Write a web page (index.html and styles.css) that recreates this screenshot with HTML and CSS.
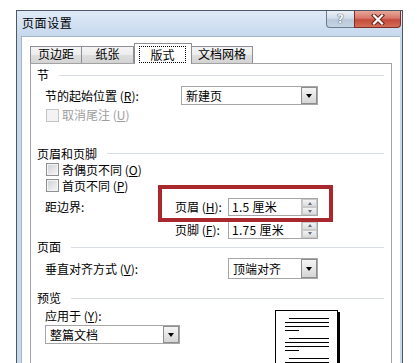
FILE: index.html
```html
<!DOCTYPE html>
<html lang="zh-CN">
<head>
<meta charset="utf-8">
<title>页面设置</title>
<link rel="stylesheet" href="styles.css">
</head>
<body>
<div class="window">
  <div class="titlebar">
    <span class="title">页面设置</span>
    <div class="caption">
      <span class="cbtn help">?</span>
      <span class="cbtn close">
        <svg width="14" height="11" viewBox="0 0 14 11"><path d="M3 1.5 L11 9.5 M11 1.5 L3 9.5" stroke="#6b2019" stroke-width="4.2" stroke-linecap="square"/><path d="M3 1.5 L11 9.5 M11 1.5 L3 9.5" stroke="#ffffff" stroke-width="2.2" stroke-linecap="square"/></svg>
      </span>
    </div>
  </div>
  <div class="frame">
    <div class="client">
      <div class="tabs">
        <div class="tab t1">页边距</div>
        <div class="tab t2">纸张</div>
        <div class="tab sel"><span class="focus">版式</span></div>
        <div class="tab t4">文档网格</div>
      </div>
      <div class="panel">
        <div class="ghead h-jie"><span>节</span><i class="rule"></i></div>
        <div class="row r-start">
          <span class="lbl w-start">节的起始位置 (<u>R</u>):</span>
          <div class="combo w-new"><span>新建页</span><b class="drop"></b></div>
        </div>
        <div class="row crow r-endnote disabled">
          <i class="chk"></i><span>取消尾注 (<u>U</u>)</span>
        </div>
        <div class="ghead h-hf"><span>页眉和页脚</span><i class="rule"></i></div>
        <div class="row crow r-odd"><i class="chk"></i><span>奇偶页不同 (<u>O</u>)</span></div>
        <div class="row crow r-first"><i class="chk"></i><span>首页不同 (<u>P</u>)</span></div>
        <div class="row r-header">
          <span class="lbl w-edge">距边界:</span>
          <span class="lbl w-hf">页眉 (<u>H</u>):</span>
          <div class="num"><span>1.5 厘米</span><b class="spin"><i class="up"></i><i class="dn"></i></b></div>
        </div>
        <div class="row r-footer">
          <span class="lbl w-edge"></span>
          <span class="lbl w-hf">页脚 (<u>F</u>):</span>
          <div class="num"><span>1.75 厘米</span><b class="spin"><i class="up"></i><i class="dn"></i></b></div>
        </div>
        <div class="ghead h-page"><span>页面</span><i class="rule"></i></div>
        <div class="row r-valign">
          <span class="lbl w-valign">垂直对齐方式 (<u>V</u>):</span>
          <div class="combo w-top"><span>顶端对齐</span><b class="drop"></b></div>
        </div>
        <div class="ghead h-prev"><span>预览</span><i class="rule"></i></div>
        <div class="prev">
          <div class="apply">
            <div class="apply-lbl">应用于 (<u>Y</u>):</div>
            <div class="combo w-doc"><span>整篇文档</span><b class="drop"></b></div>
          </div>
          <div class="page">
            <i class="ln first"></i><i class="ln"></i><i class="ln"></i><i class="ln short"></i>
            <i class="ln first gap"></i><i class="ln"></i><i class="ln"></i><i class="ln short"></i>
            <i class="ln first gap"></i><i class="ln"></i>
          </div>
        </div>
        <div class="mark"></div>
      </div>
    </div>
  </div>
</div>
</body>
</html>
```
FILE: styles.css
```css
* { box-sizing: border-box; margin: 0; padding: 0; }
html, body { width: 419px; height: 363px; overflow: hidden; background: #fff; }
body {
  font-family: "Noto Sans CJK SC", "Noto Sans", sans-serif;
  font-size: 12px;
  line-height: 14px;
  color: #000;
}
i, b { display: block; font-style: normal; }
u { text-decoration: underline; text-underline-offset: 1px; }

.window {
  margin: 10px 0 0 16px;
  width: 387px;
  height: 360px;
  border: 1px solid #4b5868;
  border-bottom: none;
  background: #c8d9ee;
  display: flex;
  flex-direction: column;
}
.titlebar {
  height: 26px;
  display: flex;
  align-items: flex-start;
  background: linear-gradient(#dfeaf7, #c6d8ee);
}
.title { flex: 1; padding: 5px 0 0 5px; letter-spacing: 0.6px; }
.caption { display: flex; margin-right: 1px; }
.cbtn { height: 17px; display: flex; align-items: center; justify-content: center; }
.help {
  width: 28px;
  border: 1px solid #6a7c92;
  border-top: none;
  border-right: none;
  border-radius: 0 0 0 4px;
  background: linear-gradient(#eaf0f7, #d2dde9 45%, #b9c8da 55%, #c6d3e2);
  color: #f2f5f9;
  font-family: "DejaVu Sans", sans-serif;
  font-weight: bold;
  font-size: 12px;
  text-shadow: 0 0 1px #3e4e62, 0 0 1px #3e4e62;
}
.close {
  width: 47px;
  border: 1px solid #7b2d26;
  border-top: none;
  border-radius: 0 0 4px 0;
  background: linear-gradient(#e7a899, #d8766a 45%, #c44a3a 55%, #d46e58);
}

.frame { flex: 1; display: flex; padding: 0 2px 0 4px; }
.client {
  flex: 1;
  background: #fff;
  border-top: 1px solid #a3b6cc;
  border-left: 1px solid #a3b6cc;
  padding: 0 8px;
  display: flex;
  flex-direction: column;
}

.tabs { height: 26px; display: flex; align-items: flex-end; }
.tab {
  height: 17px;
  border: 1px solid #8c8f96;
  border-bottom: none;
  background: linear-gradient(#f4f4f4, #ececec 50%, #dedede 50%, #d3d3d3);
  display: flex;
  align-items: center;
  justify-content: center;
  padding-bottom: 2px;
}
.t1 { width: 52px; }
.t2 { width: 52px; border-left: none; }
.t4 { width: 61px; border-left: none; }
.sel {
  width: 58px;
  height: 21px;
  margin-bottom: -1px;
  background: #fff;
  position: relative;
  z-index: 1;
  padding: 2px 5px 1px 4px;
  align-items: stretch;
}
.focus {
  flex: 1;
  border: 1px dotted #000;
  display: flex;
  align-items: center;
  justify-content: center;
}

.panel {
  flex: 1;
  border: 1px solid #a2a2a2;
  border-bottom: none;
  padding-left: 6px;
  position: relative;
}

.ghead { display: flex; align-items: center; }
.rule { flex: 1; height: 1px; background: #d8dde3; margin: 0 7px 0 10px; }
.h-jie { height: 22px; }
.h-hf { height: 17px; margin-top: 20px; }
.h-page { height: 16px; }
.h-prev { height: 22px; margin-top: 5px; }

.row { display: flex; align-items: center; margin-left: 8px; }
.r-start { height: 19px; }
.r-endnote { height: 20px; }
.r-odd { height: 15px; }
.r-first { height: 17px; }
.r-header { height: 26px; }
.r-footer { height: 19px; }
.r-valign { height: 27px; }

.crow { margin-left: 9px; }
.chk {
  width: 13px;
  height: 13px;
  margin-right: 3px;
  border: 1px solid #8e8f8f;
  background: linear-gradient(135deg, #cdd1d6, #f7f7f7);
  box-shadow: inset 0 0 0 1px #f4f4f4;
}
.disabled { color: #9d9d9d; }
.disabled .chk { border-color: #c4c4c4; background: #f3f3f3; box-shadow: none; }

.lbl { display: block; }
.w-start { width: 136px; }
.w-edge { width: 130px; }
.w-hf { width: 53px; }
.w-valign { width: 183px; }

.combo {
  display: flex;
  align-items: stretch;
  border: 1px solid #a6a6a6;
  background: #fff;
  height: 19px;
}
.combo span { flex: 1; padding-left: 4px; display: flex; align-items: center; }
.w-new { width: 137px; }
.w-top { width: 90px; height: 21px; }
.w-doc { width: 135px; margin-top: 2px; }
.drop {
  width: 16px;
  border: 1px solid #8d8d8d;
  background: linear-gradient(#f5f5f5, #d5d5d5);
  display: flex;
  align-items: center;
  justify-content: center;
}
.drop::after {
  content: "";
  border-left: 3.5px solid transparent;
  border-right: 3.5px solid transparent;
  border-top: 4px solid #000;
}

.num {
  width: 90px;
  height: 18px;
  display: flex;
  align-items: stretch;
  border: 1px solid #a6a6a6;
  background: #fff;
}
.num span { flex: 1; padding-left: 3px; display: flex; align-items: center; letter-spacing: 0.3px; }
.spin {
  width: 16px;
  display: flex;
  flex-direction: column;
  border-left: 1px solid #c2c2c2;
}
.spin i {
  flex: 1;
  display: flex;
  align-items: center;
  justify-content: center;
  background: linear-gradient(#f3f3f3, #dcdcdc);
  border: 1px solid #c9c9c9;
}
.spin .up::after {
  content: "";
  border-left: 2.5px solid transparent;
  border-right: 2.5px solid transparent;
  border-bottom: 3px solid #5a6e84;
}
.spin .dn::after {
  content: "";
  border-left: 2.5px solid transparent;
  border-right: 2.5px solid transparent;
  border-top: 3px solid #5a6e84;
}

.prev { display: flex; align-items: flex-start; margin-left: 8px; }
.apply { width: 135px; display: flex; flex-direction: column; }
.apply-lbl { height: 14px; }
.page {
  margin: 1px 0 0 95px;
  width: 63px;
  height: 60px;
  border: 1px solid #000;
  box-shadow: 2px 2px 0 #000;
  background: #fff;
  padding: 7px 0 0 9px;
  display: flex;
  flex-direction: column;
  gap: 3px;
}
.ln { width: 44px; height: 1px; background: #000; }
.ln.first { width: 40px; margin-left: 4px; }
.ln.short { width: 14px; }
.ln.gap { margin-top: 4px; }

.mark {
  position: absolute;
  left: 127px;
  top: 121px;
  width: 175px;
  height: 37px;
  border: 4px solid #a8282d;
}
```
